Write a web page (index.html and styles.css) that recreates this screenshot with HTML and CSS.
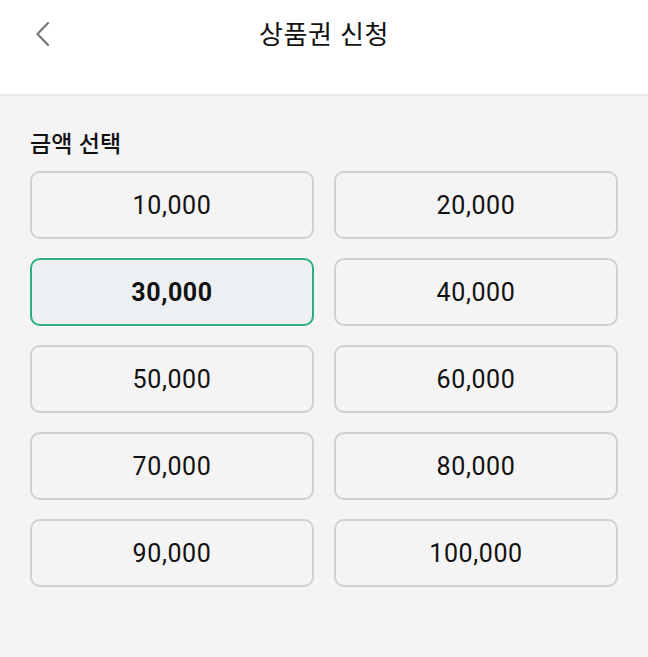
FILE: index.html
```html
<!DOCTYPE html>
<html lang="ko">
<head>
<meta charset="utf-8">
<link rel="stylesheet" href="styles.css">
</head>
<body>
<header class="topbar">
  <button class="back" aria-label="뒤로">
    <svg width="18" height="26" viewBox="0 0 18 26"><path d="M15 2 L4.5 13 L15 24" fill="none" stroke="#777" stroke-width="2.2" stroke-linecap="round" stroke-linejoin="round"/></svg>
  </button>
  <h1 class="title">상품권 신청</h1>
</header>
<main class="content">
  <h2 class="label">금액 선택</h2>
  <div class="grid">
    <button class="amt">10,000</button>
    <button class="amt">20,000</button>
    <button class="amt selected">30,000</button>
    <button class="amt">40,000</button>
    <button class="amt">50,000</button>
    <button class="amt">60,000</button>
    <button class="amt">70,000</button>
    <button class="amt">80,000</button>
    <button class="amt">90,000</button>
    <button class="amt">100,000</button>
  </div>
</main>
</body>
</html>
```
FILE: styles.css
```css
* { box-sizing: border-box; }
html, body { margin: 0; padding: 0; }
body {
  width: 648px;
  height: 657px;
  background: #f4f4f4;
  font-family: Roboto, "Noto Sans CJK KR", sans-serif;
  color: #111;
  overflow: hidden;
}
.topbar {
  height: 96px;
  background: #fff;
  border-bottom: 2px solid #e8e8e8;
  position: relative;
  display: flex;
  justify-content: center;
}
.back {
  position: absolute;
  left: 33px;
  top: 21px;
  border: 0;
  background: none;
  padding: 0;
  display: flex;
}
.title {
  margin: 0;
  margin-top: 14px;
  font-family: "Noto Sans CJK KR", sans-serif;
  font-size: 26px;
  font-weight: 400;
  line-height: 38px;
  letter-spacing: 0.5px;
  color: #111;
}
.content {
  padding: 28px 30px 0;
}
.label {
  margin: 0 0 11px;
  font-family: "Noto Sans CJK KR", sans-serif;
  font-size: 23px;
  font-weight: 500;
  line-height: 36px;
  color: #111;
}
.grid {
  display: grid;
  grid-template-columns: 1fr 1fr;
  column-gap: 20px;
  row-gap: 19px;
}
.amt {
  height: 68px;
  border: 2px solid #d0d0d0;
  border-radius: 10px;
  background: #f4f4f4;
  font-family: Roboto, sans-serif;
  font-size: 25px;
  letter-spacing: 0.6px;
  color: #111;
  padding: 0;
}
.amt.selected {
  border-color: #2eae7c;
  background: #edf0f3;
  font-weight: 700;
}
```
